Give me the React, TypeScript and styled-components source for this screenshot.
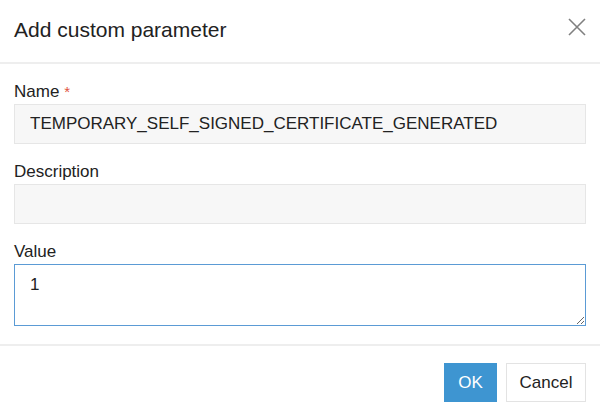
import React from "react";
import styled, { createGlobalStyle } from "styled-components";

const Global = createGlobalStyle`
  html, body { margin: 0; padding: 0; background: #fff; }
  body { font-family: "Liberation Sans", Arial, Helvetica, sans-serif; color: #222; }
  * { box-sizing: border-box; }
`;

const Dialog = styled.div`
  width: 600px;
  height: 417px;
  background: #fff;
  display: flex;
  flex-direction: column;
`;

const Header = styled.div`
  height: 64px;
  display: flex;
  align-items: center;
  justify-content: space-between;
  padding: 0 14px;
  border-bottom: 2px solid #eeeeee;
  flex-shrink: 0;
`;

const Title = styled.h1`
  margin: 0;
  font-size: 21px;
  font-weight: normal;
  color: #222;
  padding-bottom: 2px;
`;

const CloseButton = styled.button`
  border: none;
  background: none;
  padding: 0;
  width: 18px;
  height: 18px;
  margin-top: -8px;
  cursor: pointer;
  display: flex;
`;

const Body = styled.div`
  padding: 18px 14px 0;
  display: flex;
  flex-direction: column;
  gap: 18px;
`;

const Field = styled.div`
  display: flex;
  flex-direction: column;
`;

const Label = styled.label`
  font-size: 17px;
  line-height: 20px;
  margin-bottom: 2px;
  color: #222;
`;

const Required = styled.span`
  color: #e0533f;
  margin-left: 5px;
  font-size: 15px;
  vertical-align: top;
`;

const Input = styled.input`
  height: 40px;
  width: 100%;
  border: 1px solid #e6e6e6;
  background: #f7f7f7;
  font-family: inherit;
  font-size: 17px;
  padding: 0 15px;
  color: #222;
  outline: none;
`;

const TextArea = styled.textarea`
  height: 62px;
  width: 100%;
  border: 1px solid #5b9bd5;
  background: #fff;
  font-family: inherit;
  font-size: 17px;
  line-height: 20px;
  padding: 10px 15px;
  color: #222;
  outline: none;
  resize: vertical;
  display: block;
`;

const Footer = styled.div`
  margin-top: 18px;
  border-top: 2px solid #eeeeee;
  padding: 17px 14px 0;
  display: flex;
  justify-content: flex-end;
  gap: 9px;
`;

const Button = styled.button<{ $primary?: boolean }>`
  height: 39px;
  width: ${(p) => (p.$primary ? "53px" : "80px")};
  font-family: inherit;
  font-size: 17px;
  padding: 0;
  border: 1px solid ${(p) => (p.$primary ? "#3e95d1" : "#e3e3e3")};
  background: ${(p) => (p.$primary ? "#3e95d1" : "#fff")};
  color: ${(p) => (p.$primary ? "#fff" : "#222")};
  cursor: pointer;
`;

export default function App() {
  return (
    <>
      <Global />
      <Dialog>
        <Header>
          <Title>Add custom parameter</Title>
          <CloseButton aria-label="Close">
            <svg width="18" height="18" viewBox="0 0 18 18">
              <path d="M1 1 L17 17 M17 1 L1 17" stroke="#808080" strokeWidth="1.6" fill="none" />
            </svg>
          </CloseButton>
        </Header>
        <Body>
          <Field>
            <Label>
              Name<Required>*</Required>
            </Label>
            <Input defaultValue="TEMPORARY_SELF_SIGNED_CERTIFICATE_GENERATED" />
          </Field>
          <Field>
            <Label>Description</Label>
            <Input defaultValue="" />
          </Field>
          <Field>
            <Label>Value</Label>
            <TextArea defaultValue="1" />
          </Field>
        </Body>
        <Footer>
          <Button $primary>OK</Button>
          <Button>Cancel</Button>
        </Footer>
      </Dialog>
    </>
  );
}
